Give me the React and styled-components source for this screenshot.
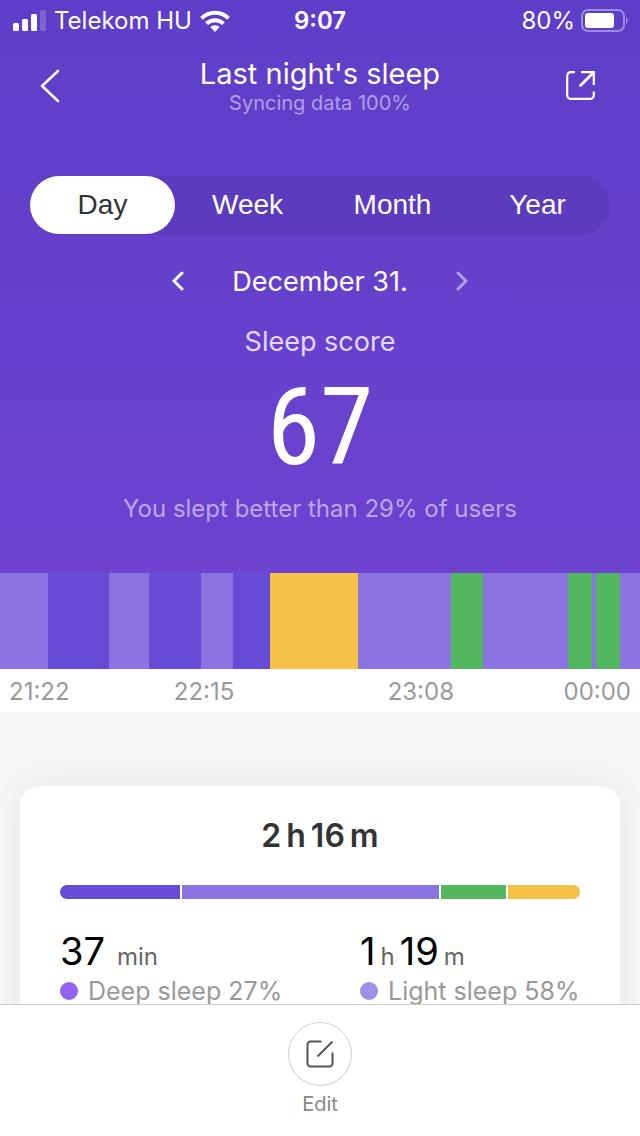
import React, { useState } from "react";
import styled, { createGlobalStyle } from "styled-components";

const colors = {
  deep: "#664bd6",
  light: "#8b73e1",
  rem: "#53b75f",
  awake: "#f4c145",
};

// length = share of the timeline
const stages = [
  { type: "light", length: 48 },
  { type: "deep", length: 61 },
  { type: "light", length: 40 },
  { type: "deep", length: 52 },
  { type: "light", length: 32 },
  { type: "deep", length: 37 },
  { type: "awake", length: 88 },
  { type: "light", length: 93 },
  { type: "rem", length: 32 },
  { type: "light", length: 85 },
  { type: "rem", length: 24 },
  { type: "light", length: 4 },
  { type: "rem", length: 24 },
  { type: "light", length: 20 },
];

const totals = [
  { type: "deep", length: 120 },
  { type: "light", length: 257 },
  { type: "rem", length: 65 },
  { type: "awake", length: 72 },
];

const tabs = ["Day", "Week", "Month", "Year"];

const GlobalStyle = createGlobalStyle`
  * {
    box-sizing: border-box;
  }

  body {
    margin: 0;
    font-family: Inter, "Liberation Sans", sans-serif;
    background: #fff;
  }

  button {
    padding: 0;
    border: 0;
    background: none;
    color: inherit;
    font: inherit;
    cursor: pointer;
  }

  h1, h2, p, ul {
    margin: 0;
    padding: 0;
    font-weight: 400;
  }
`;

const Screen = styled.div`
  display: flex;
  flex-direction: column;
  height: 100vh;
`;

const Content = styled.main`
  flex: 1;
  min-height: 0;
  overflow-y: auto;
  scrollbar-width: none;
  background: #f7f7f8;
`;

const Hero = styled.section`
  display: flex;
  flex-direction: column;
  padding-bottom: 48px;
  color: #fff;
  background: linear-gradient(#5e3ec8, #6d43d0);
`;

/* status bar */
const StatusBar = styled.div`
  display: grid;
  grid-template-columns: 1fr auto 1fr;
  align-items: center;
  padding: 0 12px;
  font-size: 24px;
  line-height: 42px;
`;

const StatusGroup = styled.div`
  display: flex;
  align-items: center;
  justify-content: ${(props) => (props.$end ? "flex-end" : "flex-start")};
  gap: ${(props) => (props.$end ? "6px" : "8px")};
  white-space: nowrap;
`;

const Clock = styled.time`
  font-weight: 600;
`;

/* title bar */
const TitleBar = styled.header`
  display: grid;
  grid-template-columns: 100px 1fr 100px;
  align-items: center;
  height: 87px;
`;

const IconButton = styled.button`
  display: flex;
  align-items: center;
  justify-content: ${(props) => (props.$end ? "flex-end" : "flex-start")};
  height: 60px;
  padding: ${(props) => (props.$end ? "0 45px 0 0" : "0 0 0 40px")};
`;

const Titles = styled.div`
  text-align: center;
`;

const Title = styled.h1`
  font-size: 29px;
  line-height: 34px;
`;

const SyncText = styled.p`
  font-size: 20px;
  line-height: 24px;
  color: #b19fe6;
`;

const Tabs = styled.nav`
  display: flex;
  height: 60px;
  margin: 46px 30px 0;
  padding: 1px 0;
  border-radius: 30px;
  background: #5c3bbf;
`;

const Tab = styled.button`
  flex: 1;
  border-radius: 29px;
  font-family: "Liberation Sans", sans-serif;
  font-size: 28px;
  color: ${(props) => (props.$active ? "#333" : "#fff")};
  background: ${(props) => (props.$active ? "#fff" : "transparent")};
`;

const DateRow = styled.div`
  display: flex;
  align-items: center;
  justify-content: center;
  gap: 30px;
  height: 48px;
  margin-top: 22px;
  font-size: 27px;
`;

const DateButton = styled.button`
  display: flex;
  align-items: center;
  justify-content: center;
  width: 48px;
  height: 48px;

  &:disabled {
    opacity: 0.5;
  }
`;

const ScoreLabel = styled.h2`
  margin-top: 21px;
  font-size: 27px;
  line-height: 32px;
  text-align: center;
  color: #e2d9f7;
`;

const Score = styled.p`
  padding-top: 4px;
  font-family: "Roboto Condensed", "Liberation Sans Narrow", Roboto, sans-serif;
  font-size: 108px;
  line-height: 131px;
  text-align: center;
`;

const Compare = styled.p`
  font-size: 24px;
  line-height: 32px;
  text-align: center;
  color: #bba7ea;
`;

/* timeline */
const Timeline = styled.div`
  display: flex;
  height: 96px;
`;

const Stage = styled.div`
  flex: ${(props) => props.$length} 1 0;
  background: ${(props) => colors[props.$type]};
`;

const TimeLabels = styled.div`
  display: grid;
  grid-template-columns: 165fr 214fr 176fr auto;
  padding: 2px 9px 0;
  font-size: 24px;
  line-height: 41px;
  color: #999;
  background: #fff;
`;

/* summary card */
const Card = styled.section`
  margin: 74px 20px 0;
  padding: 32px 40px 40px;
  border-radius: 20px;
  background: #fff;
  box-shadow: 0 0 40px rgba(60, 70, 80, 0.1);
`;

const Total = styled.h2`
  display: flex;
  justify-content: center;
  gap: 5px;
  font-size: 32px;
  font-weight: 600;
  line-height: 36px;
  color: #333;
`;

const TotalBar = styled.div`
  display: flex;
  gap: 2px;
  height: 14px;
  margin-top: 31px;
  border-radius: 7px;
  overflow: hidden;
`;

const Stats = styled.ul`
  display: grid;
  grid-template-columns: minmax(0, 300fr) minmax(0, 220fr);
  margin-top: 30px;
  list-style: none;
  white-space: nowrap;
`;

const Duration = styled.p`
  display: flex;
  align-items: baseline;
  gap: ${(props) => (props.$wide ? "12px" : "5px")};
  font-size: 38px;
  line-height: 44px;
  color: #000;
`;

const Unit = styled.span`
  font-size: 24px;
  line-height: 24px;
  color: #666;
`;

const Legend = styled.p`
  display: flex;
  align-items: center;
  gap: 10px;
  font-size: 25px;
  line-height: 36px;
  color: #999;
`;

const Dot = styled.span`
  width: 18px;
  height: 18px;
  border-radius: 50%;
  background: ${(props) => props.$color};
`;

/* footer */
const Footer = styled.footer`
  display: flex;
  justify-content: center;
  height: 132px;
  padding-top: 17px;
  border-top: 1px solid #ccc;
  background: #fff;
`;

const EditButton = styled.button`
  display: flex;
  flex-direction: column;
  align-items: center;
  gap: 6px;
  height: 94px;
  font-size: 20px;
  line-height: 24px;
  color: #888;
`;

const EditCircle = styled.span`
  display: flex;
  align-items: center;
  justify-content: center;
  width: 64px;
  height: 64px;
  border: 1px solid #ccc;
  border-radius: 50%;
  color: #555;
`;

function SignalIcon() {
  return (
    <svg width="34" height="22" viewBox="0 0 34 22" fill="#fff">
      <rect x="1" y="13" width="6" height="8" rx="1.5" />
      <rect x="10" y="9" width="6" height="12" rx="1.5" />
      <rect x="19" y="4" width="6" height="17" rx="1.5" />
      <rect x="28" y="0" width="6" height="21" rx="1.5" opacity="0.2" />
    </svg>
  );
}

function WifiIcon() {
  return (
    <svg width="30" height="22" viewBox="0 0 30 22" fill="none" stroke="#fff" strokeWidth="4">
      <path d="M1.5 8.3a19.2 19.2 0 0 1 27 0" />
      <path d="M6.6 13.6a12 12 0 0 1 16.8 0" />
      <path d="M15 22l-4.7-4.9a6.8 6.8 0 0 1 9.4 0z" fill="#fff" stroke="none" />
    </svg>
  );
}

function BatteryIcon() {
  return (
    <svg width="47" height="24" viewBox="0 0 47 24">
      <rect x="1" y="1" width="42" height="21" rx="6" fill="none" stroke="#9f8bdf" strokeWidth="2" />
      <rect x="4" y="4" width="29" height="15" rx="3" fill="#fff" />
      <path d="M45 8c2.4 1.6 2.4 5.4 0 7z" fill="#9f8bdf" />
    </svg>
  );
}

function ChevronIcon({ right, small }) {
  return (
    <svg
      width={small ? 12 : 20}
      height={small ? 20 : 34}
      viewBox={small ? "0 0 12 20" : "0 0 20 34"}
      fill="none"
      stroke="#fff"
      strokeWidth={small ? 3 : 2.6}
      strokeLinecap="round"
    >
      {small && <path d={right ? "M2 2l8 8-8 8" : "M10 2l-8 8 8 8"} />}
      {!small && <path d="M18 2L2 17l16 15" strokeLinejoin="round" />}
    </svg>
  );
}

function ShareIcon() {
  return (
    <svg width="29" height="29" viewBox="0 0 29 29" fill="none" stroke="#fff" strokeWidth="2.2">
      <path d="M9 1.200H4.500a3.300 3.300 0 0 0-3.300 3.300v20a3.300 3.300 0 0 0 3.300 3.300h20a3.300 3.300 0 0 0 3.300-3.300V20.500" />
      <path d="M15 1.200h12.800V14" />
      <path d="M27.500 1.500L14.500 14.500" strokeWidth="2.800" strokeLinecap="round" />
    </svg>
  );
}

function EditIcon() {
  return (
    <svg width="28" height="28" viewBox="0 0 28 28" fill="none" stroke="currentColor" strokeWidth="2">
      <path d="M15.5 1.500H4.500a3 3 0 0 0-3 3v19a3 3 0 0 0 3 3h19a3 3 0 0 0 3-3V12.500" />
      <path d="M26.500 1.500L11.500 16.500" />
    </svg>
  );
}

function App() {
  const [activeTab, setActiveTab] = useState("Day");

  return (
    <>
      <GlobalStyle />
      <Screen>
        <Content>
          <Hero>
            <StatusBar>
              <StatusGroup>
                <SignalIcon />
                <span>Telekom HU</span>
                <WifiIcon />
              </StatusGroup>
              <Clock>9:07</Clock>
              <StatusGroup $end>
                <span>80%</span>
                <BatteryIcon />
              </StatusGroup>
            </StatusBar>
            <TitleBar>
              <IconButton aria-label="Back">
                <ChevronIcon />
              </IconButton>
              <Titles>
                <Title>Last night's sleep</Title>
                <SyncText>Syncing data 100%</SyncText>
              </Titles>
              <IconButton $end aria-label="Share">
                <ShareIcon />
              </IconButton>
            </TitleBar>
            <Tabs>
              {tabs.map((tab) => (
                <Tab key={tab} $active={activeTab === tab} onClick={() => setActiveTab(tab)}>
                  {tab}
                </Tab>
              ))}
            </Tabs>
            <DateRow>
              <DateButton aria-label="Previous day">
                <ChevronIcon small />
              </DateButton>
              <span>December 31.</span>
              <DateButton aria-label="Next day" disabled>
                <ChevronIcon small right />
              </DateButton>
            </DateRow>
            <ScoreLabel>Sleep score</ScoreLabel>
            <Score>67</Score>
            <Compare>You slept better than 29% of users</Compare>
          </Hero>
          <Timeline>
            {stages.map((stage, i) => (
              <Stage key={i} $type={stage.type} $length={stage.length} />
            ))}
          </Timeline>
          <TimeLabels>
            <span>21:22</span>
            <span>22:15</span>
            <span>23:08</span>
            <span>00:00</span>
          </TimeLabels>
          <Card>
            <Total>
              <span>2</span>
              <span>h</span>
              <span>16</span>
              <span>m</span>
            </Total>
            <TotalBar>
              {totals.map((total) => (
                <Stage key={total.type} $type={total.type} $length={total.length} />
              ))}
            </TotalBar>
            <Stats>
              <li>
                <Duration $wide>
                  37 <Unit>min</Unit>
                </Duration>
                <Legend>
                  <Dot $color="#9264f2" />
                  Deep sleep 27%
                </Legend>
              </li>
              <li>
                <Duration>
                  1<Unit>h</Unit>19<Unit>m</Unit>
                </Duration>
                <Legend>
                  <Dot $color="#a18ee6" />
                  Light sleep 58%
                </Legend>
              </li>
            </Stats>
          </Card>
        </Content>
        <Footer>
          <EditButton>
            <EditCircle>
              <EditIcon />
            </EditCircle>
            Edit
          </EditButton>
        </Footer>
      </Screen>
    </>
  );
}

export default App;
